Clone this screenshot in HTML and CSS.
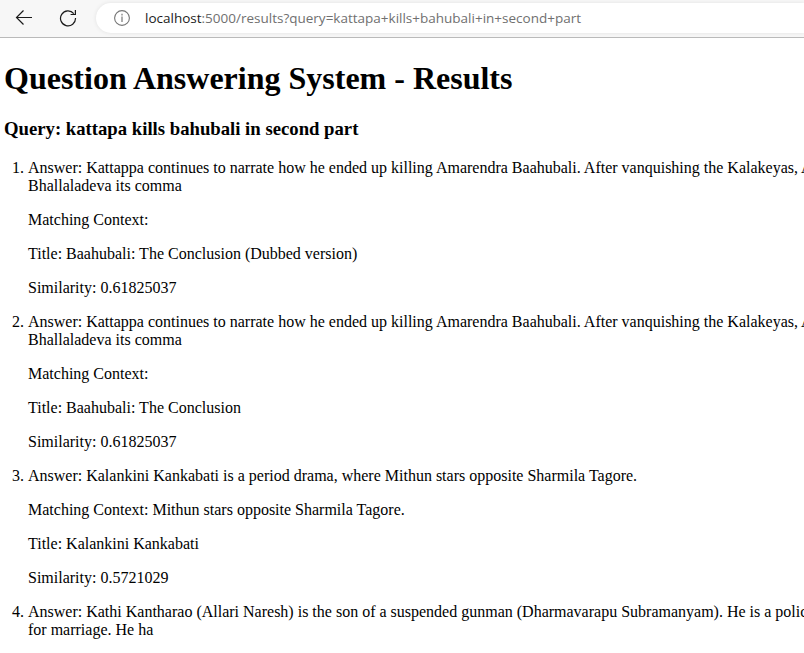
FILE: index.html
```html
<!DOCTYPE html>
<html lang="en">
<head>
<meta charset="utf-8">
<title>Question Answering System - Results</title>
<link rel="stylesheet" href="styles.css">
</head>
<body>
<header class="toolbar">
  <svg class="back" width="18" height="18" viewBox="0 0 18 18"><path d="M17 8.5H1.5M8.5 1.5L1.5 8.5L8.5 15.5"/></svg>
  <svg class="reload" width="18" height="18" viewBox="0 0 18 18"><path d="M16.5 9A7.5 7.5 0 1 1 14.8 4.6M16.4 1V5.5H11.6"/></svg>
  <div class="address">
    <svg class="info" width="16" height="16" viewBox="0 0 16 16"><circle cx="8" cy="8" r="7.4"/><path class="mark" d="M8 6.6V12M8 3.8V5.4"/></svg>
    <span class="url"><b>localhost</b>:5000/results?query=kattapa+kills+bahubali+in+second+part</span>
  </div>
</header>
<main class="page">
  <h1>Question Answering System - Results</h1>
  <h2>Query: kattapa kills bahubali in second part</h2>
  <ol>
    <li>
      <p>Answer: Kattappa continues to narrate how he ended up killing Amarendra Baahubali. After vanquishing the Kalakeyas, Amarendra<br>Bhallaladeva its comma</p>
      <p>Matching Context:</p>
      <p>Title: Baahubali: The Conclusion (Dubbed version)</p>
      <p>Similarity: 0.61825037</p>
    </li>
    <li>
      <p>Answer: Kattappa continues to narrate how he ended up killing Amarendra Baahubali. After vanquishing the Kalakeyas, Amarendra<br>Bhallaladeva its comma</p>
      <p>Matching Context:</p>
      <p>Title: Baahubali: The Conclusion</p>
      <p>Similarity: 0.61825037</p>
    </li>
    <li>
      <p>Answer: Kalankini Kankabati is a period drama, where Mithun stars opposite Sharmila Tagore.</p>
      <p>Matching Context: Mithun stars opposite Sharmila Tagore.</p>
      <p>Title: Kalankini Kankabati</p>
      <p>Similarity: 0.5721029</p>
    </li>
    <li>
      <p>Answer: Kathi Kantharao (Allari Naresh) is the son of a suspended gunman (Dharmavarapu Subramanyam). He is a police<br>for marriage. He ha</p>
    </li>
  </ol>
</main>
</body>
</html>
```
FILE: styles.css
```css
html, body { height: 100%; }
body {
  margin: 0;
  overflow: hidden;
  background: #fff;
  color: #000;
  font-family: "Liberation Serif", serif;
}
.toolbar {
  display: flex;
  align-items: center;
  box-sizing: border-box;
  height: 38px;
  padding: 0 0 1px 15px;
  background: #f7f7f7;
  border-bottom: 1px solid #bababa;
}
svg { flex: none; fill: none; stroke: #1b1b1b; stroke-width: 1.2; }
.reload { margin-left: 26px; }
.address {
  display: flex;
  flex: 1;
  align-items: center;
  height: 30px;
  margin-left: 19px;
  padding-left: 18px;
  border-radius: 15px 0 0 15px;
  background: #fff;
  box-shadow: 0 0 4px rgba(0, 0, 0, 0.09);
}
.info { stroke: #757575; stroke-width: 1.1; }
.mark { stroke: #999; stroke-width: 1.6; }
.url {
  margin-left: 15px;
  color: #707070;
  font: 13.5px "Open Sans", sans-serif;
  white-space: nowrap;
}
.url b { color: #1b1b1b; font-weight: 400; }
.page { padding: 0 4px; overflow: hidden; white-space: nowrap; }
h1 { margin: 22px 0 21px; font-size: 32px; line-height: 37px; }
h2 { margin: 0 0 20px; font-size: 18.72px; line-height: 21px; }
ol { margin: 0; padding-left: 24px; font-size: 16px; line-height: 18px; }
p { margin: 16px 0; }
```
